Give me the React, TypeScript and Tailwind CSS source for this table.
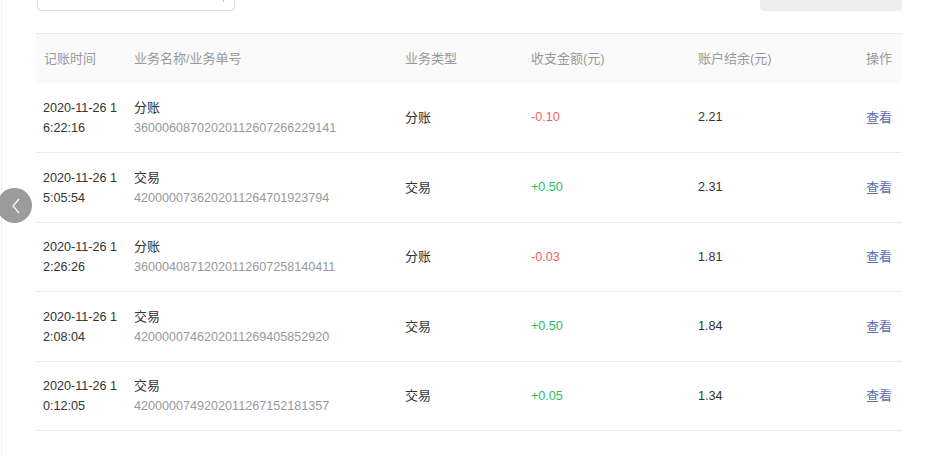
import React from "react";

type Row = {
  d1: string;
  d2: string;
  name: string;
  no: string;
  type: string;
  amount: string;
  balance: string;
  h: string;
};

const rows: Row[] = [
  { d1: "2020-11-26 1", d2: "6:22:16", name: "分账", no: "36000608702020112607266229141", type: "分账", amount: "-0.10", balance: "2.21", h: "h-[70px]" },
  { d1: "2020-11-26 1", d2: "5:05:54", name: "交易", no: "4200000736202011264701923794", type: "交易", amount: "+0.50", balance: "2.31", h: "h-[70px]" },
  { d1: "2020-11-26 1", d2: "2:26:26", name: "分账", no: "36000408712020112607258140411", type: "分账", amount: "-0.03", balance: "1.81", h: "h-[69px]" },
  { d1: "2020-11-26 1", d2: "2:08:04", name: "交易", no: "4200000746202011269405852920", type: "交易", amount: "+0.50", balance: "1.84", h: "h-[70px]" },
  { d1: "2020-11-26 1", d2: "0:12:05", name: "交易", no: "4200000749202011267152181357", type: "交易", amount: "+0.05", balance: "1.34", h: "h-[69px]" },
];

const cols = "grid grid-cols-[90px_271px_126px_167px_170px_42px]";

export default function App() {
  return (
    <div
      className="relative h-[456px] w-[939px] overflow-hidden bg-white text-[13px] text-[#333]"
      style={{ fontFamily: '"Liberation Sans", Arial, "Noto Sans CJK SC", sans-serif' }}
    >
      <div className="absolute left-[1px] top-0 h-full w-px bg-[#f2f2f2]" />
      {/* top filters */}
      <div className="mt-[-22px] flex h-[33px] items-stretch pl-[37px] pr-[37px]">
        <div className="relative w-[198px] rounded-[4px] border border-[#dcdfe6] bg-white">
          <span className="absolute right-[10px] top-[19px] h-[4px] w-[1px] bg-[#c0c4cc]" />
        </div>
        <div className="flex-1" />
        <div className="w-[142px] rounded-[4px] bg-[#ededed]" />
      </div>

      {/* table */}
      <div className="ml-[36px] mt-[22px] w-[866px] border-t border-[#ebebeb]">
        <div className={`${cols} h-[49px] items-center bg-[#fafafa] text-[#999]`}>
          <div className="pl-[8px]">记账时间</div>
          <div className="pl-[8px]">业务名称/业务单号</div>
          <div className="pl-[8px]">业务类型</div>
          <div className="pl-[8px]">收支金额(元)</div>
          <div className="pl-[8px]">账户结余(元)</div>
          <div className="pr-[10px] text-right">操作</div>
        </div>
        {rows.map((r, i) => (
          <div key={i} className={`${cols} ${r.h} items-center border-b border-[#ebebeb]`}>
            <div className="pl-[7px] pr-[7px] text-[12.6px] leading-[20px] text-[#333]">
              <div>{r.d1}</div>
              <div>{r.d2}</div>
            </div>
            <div className="pl-[8px] leading-[20px]">
              <div className="text-[#333]">{r.name}</div>
              <div className="text-[12.6px] text-[#999]">{r.no}</div>
            </div>
            <div className="pl-[8px]">{r.type}</div>
            <div
              className={`pl-[8px] text-[12.6px] ${r.amount.startsWith("-") ? "text-[#f25e5e]" : "text-[#1fbf5f]"}`}
            >
              {r.amount}
            </div>
            <div className="pl-[8px] text-[12.6px] text-[#333]">{r.balance}</div>
            <div className="pr-[10px] text-right text-[#5a6fb0]">查看</div>
          </div>
        ))}
      </div>

      {/* left arrow */}
      <div className="absolute left-[-3px] top-[188px] flex h-[35px] w-[35px] items-center justify-center rounded-full bg-[#9b9b9b]">
        <svg width="12" height="18" viewBox="0 0 12 18" className="ml-[3px]">
          <polyline points="9,2 3,9 9,16" fill="none" stroke="#fff" strokeWidth="1.2" />
        </svg>
      </div>
    </div>
  );
}
